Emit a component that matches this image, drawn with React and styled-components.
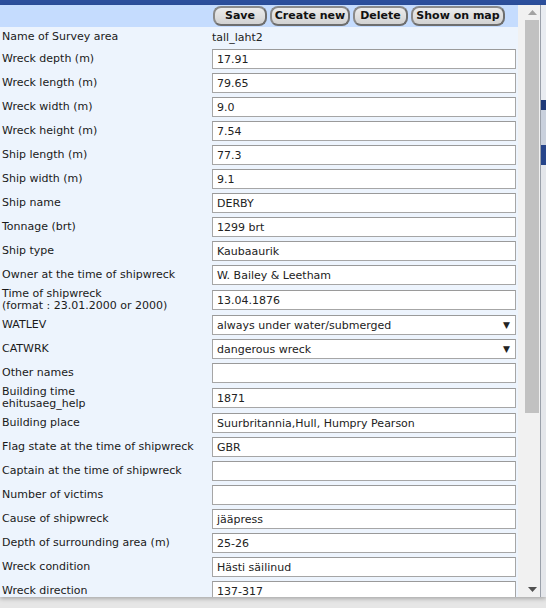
import React from "react";
import styled, { createGlobalStyle } from "styled-components";

const Global = createGlobalStyle`
  html, body { margin: 0; padding: 0; }
  body {
    background: #e4e4e4;
    overflow: hidden;
    font-family: "DejaVu Sans", Verdana, sans-serif;
  }
`;

const Page = styled.div`
  width: 546px;
  height: 608px;
  display: flex;
  flex-direction: column;
  background: #e6e6e6;
`;

const TopStrip = styled.div`
  height: 5px;
  background: #2c4f9c;
  flex: none;
`;

const Frame = styled.div`
  display: flex;
  height: 592px;
  flex: none;
  box-shadow: 0 2px 4px rgba(0, 0, 0, 0.25);
`;

const Panel = styled.div`
  width: 519px;
  background: #edf4fd;
  display: flex;
  flex-direction: column;
  overflow: hidden;
`;

const ButtonBar = styled.div`
  height: 22px;
  background: #c5dcfe;
  display: flex;
  align-items: center;
  gap: 3px;
  padding-left: 213px;
  flex: none;
`;

const Button = styled.button`
  width: ${(p) => p.$w}px;
  height: 20px;
  padding: 0;
  white-space: nowrap;
  border: 2px solid #6e6e6e;
  border-top-color: #8a8a8a;
  border-left-color: #8a8a8a;
  border-radius: 8px;
  background: linear-gradient(#ececec, #d2d2d2);
  font-family: "DejaVu Sans", Verdana, sans-serif;
  font-weight: bold;
  font-size: 11px;
  color: #111;
  line-height: 14px;
  flex: none;
`;

const Row = styled.div`
  display: flex;
  align-items: center;
  height: ${(p) => p.$h || 24}px;
  flex: none;
`;

const Label = styled.div`
  width: 212px;
  padding-left: 2px;
  box-sizing: border-box;
  font-size: 11px;
  line-height: 12px;
  color: #1a1a1a;
  flex: none;
`;

const Value = styled.div`
  font-size: 11px;
  color: #222;
`;

const Input = styled.div`
  width: 304px;
  height: 20px;
  box-sizing: border-box;
  border: 1px solid #a6a6a6;
  border-top-color: #9a9a9a;
  background: #ffffff;
  font-size: 11px;
  color: #222;
  display: flex;
  align-items: center;
  justify-content: space-between;
  padding: 0 4px;
  flex: none;
`;

const Arrow = styled.span`
  font-size: 9px;
  color: #222;
  margin-right: 1px;
`;

const ScrollBar = styled.div`
  width: 22px;
  background: #f1f1f1;
  display: flex;
  flex-direction: column;
  align-items: flex-end;
  padding-right: 1px;
  box-sizing: border-box;
`;

const ArrowBtn = styled.div`
  width: 14px;
  height: 15px;
  display: flex;
  align-items: center;
  justify-content: center;
`;

const Thumb = styled.div`
  width: 14px;
  height: 393px;
  background: #c1c1c1;
`;

const Spacer = styled.div`
  flex: 1;
`;

const MapEdge = styled.div`
  width: 5px;
  display: flex;
  flex-direction: column;
  background: #dfe3ea;
  border-left: 1px solid #9aa0aa;
`;

const MapBlock = styled.div`
  height: ${(p) => p.$h}px;
  background: ${(p) => p.$c};
`;

const fields = [
  ["Wreck depth (m)", "17.91"],
  ["Wreck length (m)", "79.65"],
  ["Wreck width (m)", "9.0"],
  ["Wreck height (m)", "7.54"],
  ["Ship length (m)", "77.3"],
  ["Ship width (m)", "9.1"],
  ["Ship name", "DERBY"],
  ["Tonnage (brt)", "1299 brt"],
  ["Ship type", "Kaubaaurik"],
  ["Owner at the time of shipwreck", "W. Bailey & Leetham"],
  [["Time of shipwreck", "(format : 23.01.2000 or 2000)"], "13.04.1876"],
  ["WATLEV", "always under water/submerged", true],
  ["CATWRK", "dangerous wreck", true],
  ["Other names", ""],
  [["Building time", "ehitusaeg_help"], "1871"],
  ["Building place", "Suurbritannia,Hull, Humpry Pearson"],
  ["Flag state at the time of shipwreck", "GBR"],
  ["Captain at the time of shipwreck", ""],
  ["Number of victims", ""],
  ["Cause of shipwreck", "jääpress"],
  ["Depth of surrounding area (m)", "25-26"],
  ["Wreck condition", "Hästi säilinud"],
  ["Wreck direction", "137-317"],
];

export default function App() {
  return (
    <Page>
      <Global />
      <TopStrip />
      <Frame>
        <Panel>
          <ButtonBar>
            <Button $w={54}>Save</Button>
            <Button $w={80}>Create new</Button>
            <Button $w={55}>Delete</Button>
            <Button $w={94}>Show on map</Button>
          </ButtonBar>
          <Row $h={20}>
            <Label>Name of Survey area</Label>
            <Value>tall_laht2</Value>
          </Row>
          {fields.map(([label, value, select], i) => {
            const multi = Array.isArray(label);
            return (
              <Row key={i} $h={multi ? 26 : 24}>
                <Label>
                  {multi ? (
                    <>
                      {label[0]}
                      <br />
                      {label[1]}
                    </>
                  ) : (
                    label
                  )}
                </Label>
                <Input>
                  <span>{value}</span>
                  {select && <Arrow>▼</Arrow>}
                </Input>
              </Row>
            );
          })}
        </Panel>
        <ScrollBar>
          <ArrowBtn>
            <svg width="9" height="5" viewBox="0 0 9 5">
              <path d="M0 5 L4.5 0 L9 5 Z" fill="#a3a3a3" />
            </svg>
          </ArrowBtn>
          <Thumb />
          <Spacer />
          <ArrowBtn>
            <svg width="9" height="5" viewBox="0 0 9 5">
              <path d="M0 0 L4.5 5 L9 0 Z" fill="#505050" />
            </svg>
          </ArrowBtn>
        </ScrollBar>
        <MapEdge>
          <MapBlock $h={95} $c="#e9ecf1" />
          <MapBlock $h={10} $c="#1f3a78" />
          <MapBlock $h={35} $c="#c9d0dc" />
          <MapBlock $h={20} $c="#27458a" />
          <MapBlock $h={432} $c="#e4e6ea" />
        </MapEdge>
      </Frame>
    </Page>
  );
}
